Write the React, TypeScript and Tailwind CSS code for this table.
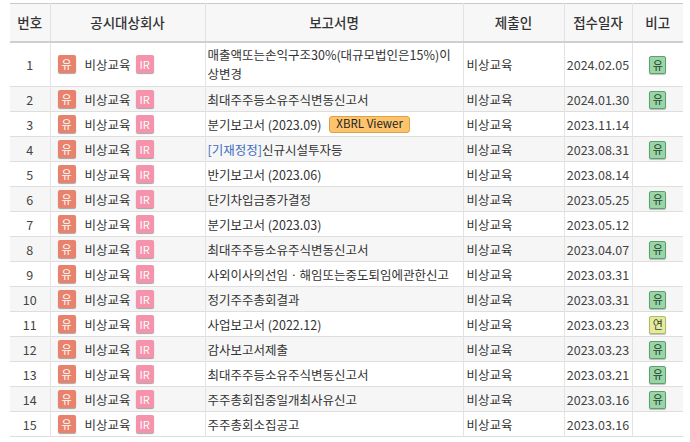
import React from 'react';

type Row = {
  no: number;
  title: React.ReactNode;
  date: string;
  note?: '유' | '연';
  tall?: boolean;
};

const rows: Row[] = [
  { no: 1, title: '매출액또는손익구조30%(대규모법인은15%)이상변경', date: '2024.02.05', note: '유', tall: true },
  { no: 2, title: '최대주주등소유주식변동신고서', date: '2024.01.30', note: '유' },
  {
    no: 3,
    title: (
      <span className="inline-flex items-center">
        분기보고서 (2023.09)
        <span className="ml-[8px] inline-flex h-[17px] items-center rounded-[3px] border border-[#e0a048] bg-[#fdc46c] px-[6px] text-[11.5px] leading-none text-[#222]">
          XBRL Viewer
        </span>
      </span>
    ),
    date: '2023.11.14',
  },
  {
    no: 4,
    title: (
      <>
        <span className="text-[#3d6cc4]">[기재정정]</span>신규시설투자등
      </>
    ),
    date: '2023.08.31',
    note: '유',
  },
  { no: 5, title: '반기보고서 (2023.06)', date: '2023.08.14' },
  { no: 6, title: '단기차입금증가결정', date: '2023.05.25', note: '유' },
  { no: 7, title: '분기보고서 (2023.03)', date: '2023.05.12' },
  { no: 8, title: '최대주주등소유주식변동신고서', date: '2023.04.07', note: '유' },
  { no: 9, title: '사외이사의선임ㆍ해임또는중도퇴임에관한신고', date: '2023.03.31' },
  { no: 10, title: '정기주주총회결과', date: '2023.03.31', note: '유' },
  { no: 11, title: '사업보고서 (2022.12)', date: '2023.03.23', note: '연' },
  { no: 12, title: '감사보고서제출', date: '2023.03.23', note: '유' },
  { no: 13, title: '최대주주등소유주식변동신고서', date: '2023.03.21', note: '유' },
  { no: 14, title: '주주총회집중일개최사유신고', date: '2023.03.16', note: '유' },
  { no: 15, title: '주주총회소집공고', date: '2023.03.16' },
];

function NoteBadge({ kind }: { kind: '유' | '연' }) {
  const cls =
    kind === '유'
      ? 'bg-[#9ad5a8] border-[#5fa070] text-[#1f3d27]'
      : 'bg-[#e3eba2] border-[#b3ba62] text-[#3b3d1a]';
  return (
    <span
      className={`inline-flex h-[18px] w-[17px] items-center justify-center rounded-[2px] border text-[11px] leading-none shadow-[0_1px_1px_rgba(0,0,0,0.25)] ${cls}`}
    >
      {kind}
    </span>
  );
}

export default function App() {
  return (
    <div
      className="min-h-screen bg-white pt-[3px] text-[12.5px] text-[#333]"
      style={{ fontFamily: '"Noto Sans CJK KR", "Noto Sans", sans-serif' }}
    >
      <table className="ml-[10px] w-[673px] table-fixed border-t border-[#c9c9c9]">
        <colgroup>
          <col className="w-[40px]" />
          <col className="w-[155px]" />
          <col className="w-[258px]" />
          <col className="w-[101px]" />
          <col className="w-[68px]" />
          <col className="w-[51px]" />
        </colgroup>
        <thead>
          <tr className="h-[38px] border-b-2 border-[#cfcfcf] bg-[#f7f7f7] text-[13.5px] text-[#333]">
            <th className="font-medium">번호</th>
            <th className="border-l border-[#e3e3e3] font-medium">공시대상회사</th>
            <th className="border-l border-[#e3e3e3] font-medium">보고서명</th>
            <th className="border-l border-[#e3e3e3] font-medium">제출인</th>
            <th className="border-l border-[#e3e3e3] font-medium">접수일자</th>
            <th className="border-l border-[#e3e3e3] font-medium">비고</th>
          </tr>
        </thead>
        <tbody>
          {rows.map((r) => (
            <tr
              key={r.no}
              className={`${r.tall ? 'h-[45px]' : 'h-[25px]'} border-b border-[#dedede] ${
                r.no % 2 === 0 ? 'bg-[#f6f6f6]' : 'bg-white'
              } leading-[19px]`}
            >
              <td className="text-center text-[#444]">{r.no}</td>
              <td className="border-l border-[#e3e3e3] pl-[7px]">
                <div className="flex items-center">
                  <span className="inline-flex h-[18px] w-[18px] items-center justify-center rounded-[2px] bg-[#e8826c] text-[11px] leading-none text-white shadow-[0_1px_1px_rgba(0,0,0,0.35)]">
                    유
                  </span>
                  <span className="ml-[9px]">비상교육</span>
                  <span className="ml-[5px] inline-flex h-[18px] w-[18px] items-center justify-center rounded-[2px] bg-[#f493ab] text-[11px] leading-none text-white shadow-[0_1px_1px_rgba(0,0,0,0.35)]">
                    IR
                  </span>
                </div>
              </td>
              <td className="border-l border-[#e3e3e3] pl-[2px] pr-[2px]">{r.title}</td>
              <td className="border-l border-[#e3e3e3] pl-[3px]">비상교육</td>
              <td className="border-l border-[#e3e3e3] text-center text-[#444]">{r.date}</td>
              <td className="border-l border-[#e3e3e3] text-center">
                {r.note && <NoteBadge kind={r.note} />}
              </td>
            </tr>
          ))}
        </tbody>
      </table>
    </div>
  );
}
